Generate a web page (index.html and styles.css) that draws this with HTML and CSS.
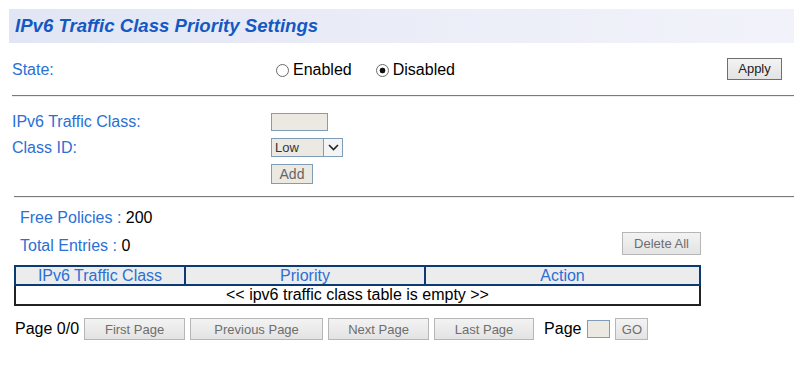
FILE: index.html
```html
<!DOCTYPE html>
<html lang="en">
<head>
    <meta charset="UTF-8">
    <title>IPv6 Traffic Class Priority Settings</title>
    <link rel="stylesheet" href="styles.css">
</head>
<body>
    <div class="title-bar">
        <h1>IPv6 Traffic Class Priority Settings</h1>
    </div>

    <div class="state-row">
        <span class="label">State:</span>
        <div class="radios">
            <input type="radio" name="state" id="stEnabled">
            <label for="stEnabled">Enabled</label>
            <input type="radio" name="state" id="stDisabled" checked>
            <label for="stDisabled">Disabled</label>
        </div>
        <button class="btn apply">Apply</button>
    </div>
    <hr class="sep">

    <div class="cfg">
        <div class="cfg-row">
            <span class="label">IPv6 Traffic Class:</span>
            <input type="text" class="txt">
        </div>
        <div class="cfg-row">
            <span class="label">Class ID:</span>
            <div class="select-box">
                <select>
                    <option>Low</option>
                    <option>Normal</option>
                    <option>Medium</option>
                    <option>High</option>
                </select>
                <span class="arrow">
                    <svg width="11" height="7" viewBox="0 0 11 7"><path d="M1 1 L5.5 5.5 L10 1" fill="none" stroke="#222" stroke-width="1.6"/></svg>
                </span>
            </div>
        </div>
        <div class="cfg-row">
            <span class="label"></span>
            <button class="add">Add</button>
        </div>
    </div>
    <hr class="sep sep2">

    <div class="list">
        <p class="info"><span class="label">Free Policies :</span> 200</p>
        <div class="total-row">
            <p class="info"><span class="label">Total Entries :</span> 0</p>
            <button class="btn gray">Delete All</button>
        </div>

        <table class="entries">
            <tr>
                <th class="c1">IPv6 Traffic Class</th>
                <th class="c2">Priority</th>
                <th class="c3">Action</th>
            </tr>
            <tr>
                <td colspan="3">&lt;&lt; ipv6 traffic class table is empty &gt;&gt;</td>
            </tr>
        </table>

        <div class="pager">
            <span class="page-no">Page 0/0</span>
            <button class="btn gray w101">First Page</button>
            <button class="btn gray w133">Previous Page</button>
            <button class="btn gray w101">Next Page</button>
            <button class="btn gray w100">Last Page</button>
            <span class="page-lbl">Page</span>
            <input type="text" class="txt go-input">
            <button class="btn gray go">GO</button>
        </div>
    </div>
</body>
</html>
```

FILE: styles.css
```css
body {
    margin: 0;
    font-family: "Liberation Sans", Arial, sans-serif;
    font-size: 16px;
    color: #000;
    background: #fff;
}
.title-bar {
    margin: 9px 0 0 9px;
    height: 34px;
    background: linear-gradient(to right, #e2e6f4, #eceef8 60%, #f2f3fa);
}
.title-bar h1 {
    margin: 0;
    padding-left: 6px;
    line-height: 34px;
    font-size: 18.6px;
    font-weight: bold;
    font-style: italic;
    color: #1458c4;
}
.label {
    color: #2a70d6;
}
.state-row {
    display: flex;
    align-items: center;
    height: 52px;
    padding: 0 12px;
}
.state-row .label {
    width: 259px;
    padding-top: 2px;
}
.radios {
    flex: 1;
    display: flex;
    align-items: center;
    padding-top: 2px;
}
.radios input {
    -webkit-appearance: none;
    appearance: none;
    width: 13px;
    height: 13px;
    margin: 0 4px 0 5px;
    border: 1px solid #6a6a6a;
    border-radius: 50%;
    background: #fff;
}
.radios input:checked {
    background: radial-gradient(circle, #111 0, #111 2.6px, #fff 3.2px);
}
.radios label {
    margin-right: 19px;
}
.btn {
    font-family: "Liberation Sans", Arial, sans-serif;
    font-size: 13px;
    height: 22px;
    padding: 0;
    border: 1px solid #b6b6b6;
    background: linear-gradient(#f3f3f3, #e3e3e3);
    color: #6e6e6e;
}
.apply {
    width: 55px;
    border-color: #6f6f6f;
    color: #222;
    margin-top: -1px;
}
.sep {
    margin: 0 0 0 12px;
    height: 0;
    border: none;
    border-top: 1px solid #7a7a7a;
    border-bottom: 1px solid #eeeeee;
}
.sep2 {
    margin-left: 14px;
}
.cfg {
    padding: 16px 0 12px 12px;
}
.cfg-row {
    display: flex;
    align-items: center;
    margin-bottom: 7px;
}
.cfg-row:last-child {
    margin-bottom: 0;
}
.cfg-row .label {
    width: 259px;
}
.txt {
    box-sizing: border-box;
    width: 57px;
    height: 18px;
    border: 1px solid #7f9db9;
    background: #ece9e2;
    padding: 0;
}
.select-box {
    box-sizing: border-box;
    display: flex;
    width: 72px;
    height: 19px;
    border: 1px solid #7f9db9;
    background: #ece9e2;
}
.select-box select {
    -webkit-appearance: none;
    appearance: none;
    flex: 1;
    border: none;
    background: transparent;
    font-family: "Liberation Sans", Arial, sans-serif;
    font-size: 13px;
    color: #333;
    padding: 0 0 0 3px;
    outline: none;
}
.select-box .arrow {
    box-sizing: border-box;
    width: 19px;
    border-left: 1px solid #7f9db9;
    background: #f4f4f4;
    display: flex;
    align-items: center;
    justify-content: center;
}
.add {
    box-sizing: border-box;
    width: 42px;
    height: 20px;
    padding: 0;
    border: 1px solid #7f9db9;
    background: #ece9e2;
    font-family: "Liberation Sans", Arial, sans-serif;
    font-size: 14px;
    color: #666;
}
.list {
    width: 687px;
    margin-left: 14px;
}
.info {
    margin: 0;
    padding-left: 6px;
    line-height: 18px;
}
.list > .info {
    margin-top: 11px;
}
.total-row {
    display: flex;
    justify-content: space-between;
    align-items: center;
    margin-top: 4px;
}
.total-row .info {
    padding-top: 6px;
}
.total-row .btn {
    width: 79px;
    height: 23px;
}
.entries {
    width: 687px;
    margin-top: 10px;
    border-collapse: collapse;
    border: 2px solid #222;
}
.entries th {
    height: 17px;
    padding: 0;
    font-weight: normal;
    color: #2a70d6;
    background: #ececec;
    border: 2px solid #0c3a74;
    line-height: 17px;
}
.entries td {
    height: 18px;
    padding: 0;
    text-align: center;
    line-height: 18px;
}
.entries .c1 { width: 168px; }
.entries .c2 { width: 238px; }
.pager {
    display: flex;
    align-items: center;
    margin-top: 12px;
    margin-left: 1px;
}
.pager .btn {
    margin-right: 5px;
}
.page-no {
    margin-right: 5px;
}
.w101 { width: 101px; }
.w133 { width: 133px; }
.w100 { width: 100px; }
.page-lbl {
    margin-left: 5px;
    margin-right: 6px;
}
.go-input {
    width: 23px;
    margin-right: 5px;
}
.go {
    width: 33px;
}
```
